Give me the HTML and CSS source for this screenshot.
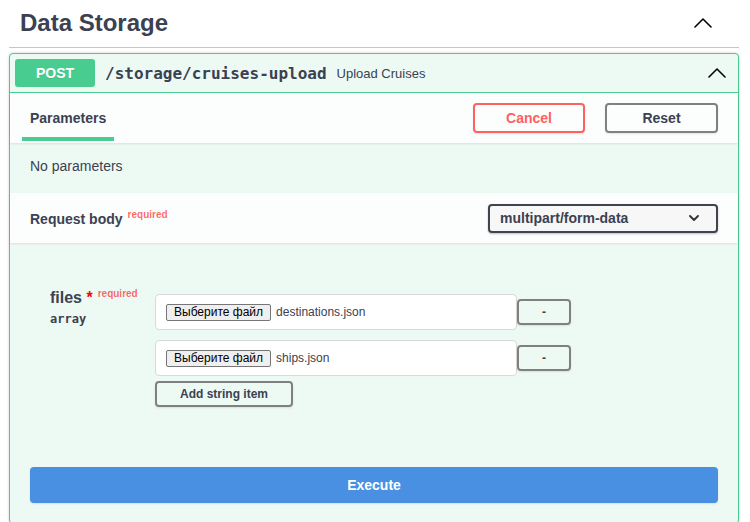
FILE: index.html
```html
<!DOCTYPE html>
<html>
<head>
<meta charset="utf-8">
<link rel="stylesheet" href="styles.css">
</head>
<body>
<div class="tag">
  <h3 class="tag-title">Data Storage</h3>
  <svg class="chev" width="18" height="10" viewBox="0 0 18 10"><polyline points="1,9 9,1 17,9" fill="none" stroke="#000" stroke-width="1.6" stroke-linecap="round" stroke-linejoin="round"/></svg>
</div>
<div class="opblock">
  <div class="summary">
    <span class="method">POST</span>
    <span class="path">/storage/cruises-upload</span>
    <span class="desc">Upload Cruises</span>
    <svg class="chev chev-sum" width="18" height="10" viewBox="0 0 18 10"><polyline points="1,9 9,1 17,9" fill="none" stroke="#000" stroke-width="1.6" stroke-linecap="round" stroke-linejoin="round"/></svg>
  </div>
  <div class="section-header">
    <div class="tab">Parameters</div>
    <div class="actions">
      <button class="btn cancel">Cancel</button>
      <button class="btn reset">Reset</button>
    </div>
  </div>
  <div class="no-params">No parameters</div>
  <div class="section-header rb">
    <div class="rb-title">Request body<span class="req">required</span></div>
    <div class="select">multipart/form-data<svg width="10" height="6" viewBox="0 0 10 6"><polyline points="1,1 5,5 9,1" fill="none" stroke="#303030" stroke-width="1.8" stroke-linecap="round" stroke-linejoin="round"/></svg></div>
  </div>
  <div class="body">
    <div class="param">
      <div class="pname">
        <div class="name">files&nbsp;<span class="star">*</span><span class="req">required</span></div>
        <div class="type">array</div>
      </div>
      <div class="pvalue">
        <div class="item">
          <div class="file"><span class="fbtn">Выберите файл</span><span class="fname">destinations.json</span></div>
          <button class="btn small">-</button>
        </div>
        <div class="item">
          <div class="file"><span class="fbtn">Выберите файл</span><span class="fname">ships.json</span></div>
          <button class="btn small">-</button>
        </div>
        <button class="btn add">Add string item</button>
      </div>
    </div>
    <div class="exec"><button class="execute">Execute</button></div>
  </div>
</div>
</body>
</html>
```

FILE: styles.css
```css
body {
  margin: 0;
  font-family: "Liberation Sans", Arial, sans-serif;
  color: #3b4151;
  background: #fff;
}

button {
  font-family: inherit;
  cursor: pointer;
}

.tag {
  display: flex;
  align-items: center;
  justify-content: space-between;
  box-sizing: border-box;
  height: 48px;
  margin: 0 11px 5px 9px;
  padding: 0 27px 2px 11px;
  border-bottom: 1px solid #c4c6cb;
}

.tag-title {
  margin: 0;
  font-size: 24px;
  font-weight: 700;
  line-height: 30px;
}

.opblock {
  margin: 0 11px 0 9px;
  border: 1px solid #49cc90;
  border-radius: 4px;
  background: #edfaf4;
  box-shadow: 0 0 3px rgba(0, 0, 0, .19);
}

.summary {
  display: flex;
  align-items: center;
  padding: 5px 12px 5px 5px;
  border-bottom: 1px solid #49cc90;
}

.method {
  width: 80px;
  padding: 6px 0;
  line-height: 16px;
  text-align: center;
  background: #49cc90;
  color: #fff;
  font-size: 14px;
  font-weight: 700;
  border-radius: 3px;
  text-shadow: 0 1px 0 rgba(0, 0, 0, .1);
}

.path {
  padding: 0 10px;
  font-family: "DejaVu Sans Mono", monospace;
  font-size: 16px;
  font-weight: 700;
}

.desc {
  font-size: 13px;
}

.chev-sum {
  margin-left: auto;
}

.section-header {
  display: flex;
  align-items: center;
  box-sizing: border-box;
  min-height: 50px;
  padding: 0 20px 0 12px;
  background: rgba(255, 255, 255, .8);
  box-shadow: 0 1px 2px rgba(0, 0, 0, .1);
}

.tab {
  align-self: flex-end;
  margin-bottom: 2px;
  padding: 0 8px 9px;
  border-bottom: 4px solid #49cc90;
  font-size: 14px;
  font-weight: 700;
  line-height: 20px;
}

.actions {
  margin-left: auto;
  display: flex;
  gap: 20px;
}

.btn {
  box-sizing: border-box;
  height: 30px;
  padding: 0;
  border: 2px solid #808080;
  border-radius: 4px;
  background: transparent;
  color: #3b4151;
  font-size: 14px;
  font-weight: 700;
  box-shadow: 0 1px 2px rgba(0, 0, 0, .1);
}

.btn.cancel {
  width: 112px;
  border-color: #ff6060;
  color: #ff6060;
}

.btn.reset {
  width: 113px;
}

.no-params {
  display: flex;
  align-items: center;
  box-sizing: border-box;
  height: 50px;
  padding: 0 20px 4px;
  font-size: 14px;
}

.rb {
  padding: 0 20px;
}

.rb-title {
  font-size: 14px;
  font-weight: 700;
}

.req {
  padding: 5px;
  font-size: 10px;
  font-weight: 700;
  color: rgba(255, 0, 0, .6);
  vertical-align: super;
}

.select {
  margin-left: auto;
  display: flex;
  align-items: center;
  justify-content: space-between;
  box-sizing: border-box;
  width: 230px;
  height: 29px;
  padding: 0 17px 0 10px;
  border: 2px solid #41444e;
  border-radius: 4px;
  background: #f7f7f7;
  font-size: 14px;
  font-weight: 700;
  box-shadow: 0 1px 2px rgba(0, 0, 0, .25);
}

.body {
  padding: 41px 20px 20px;
}

.param {
  display: flex;
  padding-left: 20px;
}

.pname {
  width: 105px;
  flex: none;
}

.name {
  font-size: 16px;
  font-weight: 700;
  line-height: 20px;
}

.star {
  color: #f00;
}

.type {
  margin-top: 3px;
  font-family: "DejaVu Sans Mono", monospace;
  font-size: 12px;
  font-weight: 700;
  line-height: 16px;
}

.pvalue {
  padding-top: 10px;
}

.item {
  display: flex;
  align-items: center;
}

.item + .item {
  margin-top: 10px;
}

.file {
  display: flex;
  align-items: center;
  box-sizing: border-box;
  width: 362px;
  height: 36px;
  padding: 0 10px;
  border: 1px solid #d9d9d9;
  border-radius: 4px;
  background: #fff;
  font-size: 12px;
}

.fbtn {
  margin-right: 5px;
  padding: 1px 7px;
  border: 1px solid #767676;
  border-radius: 2px;
  background: #efefef;
  color: #000;
  font-family: Arial, "Liberation Sans", sans-serif;
  font-size: 12px;
  line-height: 13px;
}

.fname {
  color: #3b4151;
}

.btn.small {
  width: 54px;
  height: 26px;
  font-size: 12px;
}

.btn.add {
  display: block;
  margin-top: 5px;
  width: 138px;
  height: 26px;
  font-size: 12px;
}

.exec {
  margin-top: 60px;
}

.execute {
  display: block;
  width: 100%;
  height: 36px;
  border: 2px solid #4990e2;
  border-radius: 4px;
  background: #4990e2;
  color: #fff;
  font-size: 14px;
  font-weight: 700;
  box-shadow: 0 1px 2px rgba(0, 0, 0, .1);
}
```
